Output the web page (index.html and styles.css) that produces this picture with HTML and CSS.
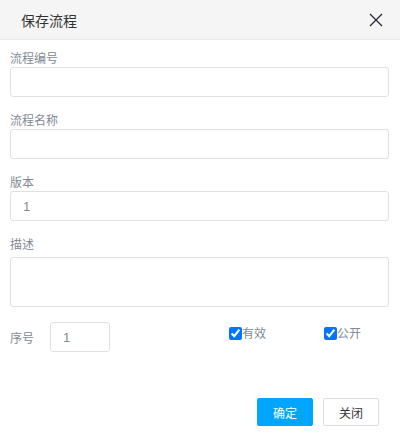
FILE: index.html
```html
<!DOCTYPE html>
<html lang="zh-CN">
<head>
<meta charset="utf-8">
<link rel="stylesheet" href="styles.css">
</head>
<body>
<div class="dialog">
  <div class="header">
    <span class="title">保存流程</span>
    <svg class="close" width="14" height="14" viewBox="0 0 14 14"><path d="M1 1L13 13M13 1L1 13" stroke="#2b2b3a" stroke-width="1.3" fill="none"/></svg>
  </div>
  <div class="body">
    <div class="group">
      <div class="label">流程编号</div>
      <input class="input" type="text">
    </div>
    <div class="group">
      <div class="label">流程名称</div>
      <input class="input" type="text">
    </div>
    <div class="group">
      <div class="label">版本</div>
      <input class="input" type="text" value="1">
    </div>
    <div class="group">
      <div class="label">描述</div>
      <textarea class="input area"></textarea>
    </div>
    <div class="row">
      <span class="label inline">序号</span>
      <input class="input small" type="text" value="1">
      <label class="check c1"><input type="checkbox" checked>有效</label>
      <label class="check c2"><input type="checkbox" checked>公开</label>
    </div>
    <div class="footer">
      <button class="btn primary">确定</button>
      <button class="btn">关闭</button>
    </div>
  </div>
</div>
</body>
</html>
```
FILE: styles.css
```css
* { box-sizing: border-box; }
html, body { margin: 0; padding: 0; background: #fff; }
body { font-family: "Noto Sans CJK SC", "Noto Sans", sans-serif; font-size: 12px; color: #333; }
.dialog { width: 400px; height: 437px; }
.header {
  height: 40px;
  background: #f5f5f5;
  border-bottom: 1px solid #e8e8e8;
  display: flex;
  align-items: center;
  justify-content: space-between;
  padding: 0 17px 0 21px;
}
.title { font-size: 14px; color: #333; line-height: 20px; }
.close { display: block; }
.body { padding: 8px 11px 0 10px; }
.group { margin-bottom: 13px; }
.label { color: #7f8a94; font-size: 12px; line-height: 19px; height: 19px; }
.input {
  display: block;
  width: 100%;
  height: 30px;
  border: 1px solid #e0e0e0;
  border-radius: 3px;
  padding: 0 12px;
  font-family: "Liberation Sans", "Noto Sans CJK SC", sans-serif;
  font-size: 13px;
  color: #7f8a94;
  outline: none;
  background: #fff;
}
.area { height: 50px; margin-top: 4px; resize: none; }
.group:nth-child(4) { margin-bottom: 15px; }
.row { display: flex; align-items: center; height: 30px; }
.inline { height: auto; width: 40px; }
.small { width: 60px; padding: 0 12px; }
.check { display: flex; align-items: center; color: #7f8a94; font-size: 12px; line-height: 16px; }
.check input { margin: 0; width: 13px; height: 13px; accent-color: #0075ff; }
.c1 { margin-left: 119px; margin-top: -8px; }
.c2 { margin-left: 58px; margin-top: -8px; }
.footer { display: flex; justify-content: flex-end; gap: 10px; margin-top: 46px; padding-right: 10px; }
.btn {
  height: 28px;
  width: 56px;
  border: 1px solid #ddd;
  border-radius: 2px;
  background: #fff;
  color: #333;
  font-family: "Noto Sans CJK SC", sans-serif;
  font-size: 12px;
  padding: 0;
}
.primary { background: #00a5ff; border-color: #00a5ff; color: #fff; }
```
